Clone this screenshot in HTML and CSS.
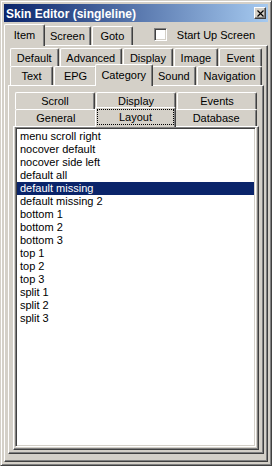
FILE: index.html
```html
<!DOCTYPE html>
<html lang="en">
<head>
    <meta charset="UTF-8">
    <title>Skin Editor (singleline)</title>
    <link rel="stylesheet" href="styles.css">
</head>
<body>

<div class="window">
    <div class="titlebar">
        <span class="title">Skin Editor (singleline)</span>
        <span class="close">
            <svg width="7" height="7" viewBox="0 0 7 7"><path d="M0.5 0.5 L6.5 6.5 M6.5 0.5 L0.5 6.5" stroke="#000" stroke-width="1.2" fill="none"/></svg>
        </span>
    </div>

    <div class="strip main-strip">
        <div class="tab sel">Item</div>
        <div class="tab">Screen</div>
        <div class="tab">Goto</div>
        <label class="check"><span class="box"></span>Start Up Screen</label>
    </div>

    <div class="page outer-page">
        <div class="row mid back">
            <div class="tab">Default</div>
            <div class="tab">Advanced</div>
            <div class="tab">Display</div>
            <div class="tab">Image</div>
            <div class="tab">Event</div>
        </div>
        <div class="row mid front">
            <div class="tab">Text</div>
            <div class="tab">EPG</div>
            <div class="tab sel">Category</div>
            <div class="tab">Sound</div>
            <div class="tab">Navigation</div>
        </div>

        <div class="page cat-page">
            <div class="row small back">
                <div class="tab">Scroll</div>
                <div class="tab">Display</div>
                <div class="tab">Events</div>
            </div>
            <div class="row small front">
                <div class="tab">General</div>
                <div class="tab sel focus">Layout</div>
                <div class="tab">Database</div>
            </div>

            <div class="page list-page">
                <div class="listbox">
                    <div class="item">menu scroll right</div>
                    <div class="item">nocover default</div>
                    <div class="item">nocover side left</div>
                    <div class="item">default all</div>
                    <div class="item active">default missing</div>
                    <div class="item">default missing 2</div>
                    <div class="item">bottom 1</div>
                    <div class="item">bottom 2</div>
                    <div class="item">bottom 3</div>
                    <div class="item">top 1</div>
                    <div class="item">top 2</div>
                    <div class="item">top 3</div>
                    <div class="item">split 1</div>
                    <div class="item">split 2</div>
                    <div class="item">split 3</div>
                </div>
            </div>
        </div>
    </div>
</div>

</body>
</html>
```

FILE: styles.css
```css
body {
    margin: 0;
    font-family: 'Liberation Sans', Arial, sans-serif;
    font-size: 11px;
    color: #000;
    background-color: #d4d0c8;
}

.window {
    width: 272px;
    height: 466px;
    box-sizing: border-box;
    display: flex;
    flex-direction: column;
    padding: 3px;
    background-color: #d4d0c8;
    border: 1px solid;
    border-color: #d4d0c8 #404040 #404040 #d4d0c8;
    box-shadow: inset 1px 1px #fff, inset -1px -1px #808080;
}

.titlebar {
    height: 18px;
    flex: none;
    display: flex;
    align-items: center;
    justify-content: space-between;
    padding: 0 2px;
    background: linear-gradient(to right, #0a246a, #a6caf0);
    color: #fff;
}

.title {
    font-weight: bold;
    font-size: 12px;
    padding-top: 1px;
}

.close {
    width: 12px;
    height: 12px;
    box-sizing: border-box;
    display: flex;
    align-items: center;
    justify-content: center;
    background-color: #d4d0c8;
    border: 1px solid;
    border-color: #fff #404040 #404040 #fff;
    box-shadow: inset -1px -1px #808080;
}

/* tabs */
.strip,
.row {
    display: flex;
    align-items: flex-end;
    flex: none;
    padding: 0 2px;
}

.tab {
    box-sizing: border-box;
    display: flex;
    align-items: center;
    justify-content: center;
    white-space: nowrap;
    background-color: #d4d0c8;
    border: 1px solid;
    border-bottom: 0;
    border-color: #fff #404040 #fff #fff;
    border-radius: 2px 2px 0 0;
    box-shadow: inset -1px 0 #808080;
}

.tab + .tab {
    margin-left: 1px;
}

.tab.sel {
    position: relative;
    z-index: 1;
    margin: 0 -2px -1px;
}

.main-strip {
    height: 21px;
    padding-top: 2px;
}

.main-strip .tab {
    height: 19px;
    min-width: 41px;
    padding: 0 5px;
}

.main-strip .tab.sel {
    height: 22px;
    padding-bottom: 2px;
}

.check {
    display: flex;
    align-items: center;
    gap: 10px;
    align-self: flex-start;
    margin: 4px 0 0 21px;
}

.box {
    width: 13px;
    height: 13px;
    box-sizing: border-box;
    background-color: #fff;
    border: 1px solid;
    border-color: #808080 #fff #fff #808080;
    box-shadow: inset 1px 1px #404040, inset -1px -1px #d4d0c8;
}

.row.mid {
    height: 18px;
}

.row.mid .tab {
    flex: 1 1 auto;
    min-width: 43px;
    padding: 0 4px;
    height: 18px;
}

.row.mid.front {
    height: 19px;
}

.row.mid.front .tab {
    height: 19px;
}

.row.mid .tab.sel {
    height: 22px;
    padding-bottom: 2px;
}

.row.small {
    height: 17px;
}

.row.small .tab {
    flex: 1 1 0;
    height: 17px;
}

.row.small .tab.sel {
    height: 20px;
    padding-bottom: 2px;
}

.tab.focus {
    outline: 1px dotted #000;
    outline-offset: -3px;
}

/* pages */
.page {
    display: flex;
    flex-direction: column;
    background-color: #d4d0c8;
    border: 1px solid;
    border-color: #fff #404040 #404040 #fff;
    box-shadow: inset -1px -1px #808080;
}

.outer-page {
    flex: 1;
    padding: 2px 3px 7px;
}

.cat-page {
    flex: 1;
    padding: 6px 4px 3px;
}

.list-page {
    flex: 1;
    padding: 0 2px 2px 1px;
}

.listbox {
    flex: 1;
    padding-top: 2px;
    background-color: #fff;
    border: 1px solid;
    border-color: #808080 #fff #fff #808080;
    box-shadow: inset 1px 1px #404040, inset -1px -1px #d4d0c8;
}

.item {
    height: 13px;
    line-height: 13px;
    padding-left: 3px;
    margin: 0 1px;
    white-space: nowrap;
}

.item.active {
    background-color: #0a246a;
    color: #fff;
}
```
